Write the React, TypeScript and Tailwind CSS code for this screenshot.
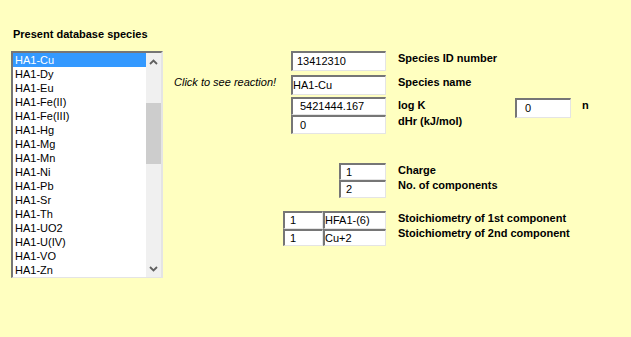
const species = [
  'HA1-Cu',
  'HA1-Dy',
  'HA1-Eu',
  'HA1-Fe(II)',
  'HA1-Fe(III)',
  'HA1-Hg',
  'HA1-Mg',
  'HA1-Mn',
  'HA1-Ni',
  'HA1-Pb',
  'HA1-Sr',
  'HA1-Th',
  'HA1-UO2',
  'HA1-U(IV)',
  'HA1-VO',
  'HA1-Zn',
];

const boxBorder =
  'border-t-2 border-l-2 border-t-[#767676] border-l-[#767676] border-b border-r border-b-[#e4e4e4] border-r-[#e4e4e4] bg-white';

function Box({ value, className }: { value: string; className: string }) {
  return (
    <div className={`flex items-center ${boxBorder} ${className}`}>
      <span className="leading-none">{value}</span>
    </div>
  );
}

function Chevron({ up }: { up?: boolean }) {
  return (
    <svg width="9" height="6" viewBox="0 0 9 6" className={up ? '' : 'rotate-180'}>
      <path d="M1 5 L4.5 1.5 L8 5" fill="none" stroke="#606060" strokeWidth="1.8" />
    </svg>
  );
}

export default function App() {
  return (
    <div className="flex h-[337px] w-[631px] overflow-hidden bg-[#ffffc0] font-['Liberation_Sans',Arial,sans-serif] text-[11px] text-black">
      {/* Species list */}
      <div className="flex flex-col pl-[11px] pt-[27px]">
        <div className="pl-[2px] text-[11px] font-bold leading-[14px]">Present database species</div>
        <div className="mt-[10px] flex h-[227px] w-[152px] border-t-2 border-l-2 border-t-[#767676] border-l-[#767676] border-b border-r-2 border-b-[#e4e4e4] border-r-[#e4e4e4] bg-white">
          <div className="flex-1 overflow-hidden">
            {species.map((s, i) => (
              <div
                key={s}
                className={`h-[14px] pl-[2px] leading-[14px] ${
                  i === 0 ? 'bg-[#3399ff] text-white' : ''
                }`}
              >
                {s}
              </div>
            ))}
          </div>
          <div className="flex w-[15px] flex-col bg-[#f0f0f0]">
            <div className="flex h-[17px] items-center justify-center">
              <Chevron up />
            </div>
            <div className="mt-[33px] h-[61px] bg-[#cdcdcd]" />
            <div className="flex-1" />
            <div className="flex h-[17px] items-center justify-center">
              <Chevron />
            </div>
          </div>
        </div>
      </div>

      {/* Species details */}
      <div className="ml-[11px] flex flex-col pt-[51px]">
        <div className="flex">
          <div className="flex w-[212px] justify-end">
            <Box value="13412310" className="h-[20px] w-[95px] pl-[4px]" />
          </div>
          <div className="ml-[12px] pt-[1px] font-bold leading-[13px]">Species ID number</div>
        </div>

        <div className="mt-[4px] flex">
          <div className="flex w-[212px] items-start justify-between">
            <span className="pt-[1px] italic leading-[13px]">Click to see reaction!</span>
            <Box value="HA1-Cu" className="h-[20px] w-[95px] pl-0" />
          </div>
          <div className="ml-[12px] pt-[1px] font-bold leading-[13px]">Species name</div>
        </div>

        <div className="mt-[2px] flex">
          <div className="flex w-[212px] justify-end">
            <div className="flex flex-col">
              <Box value="5421444.167" className="h-[18px] w-[95px] pl-[7px]" />
              <Box value="0" className="h-[19px] w-[95px] pl-[7px]" />
            </div>
          </div>
          <div className="ml-[12px] flex w-[117px] flex-col font-bold leading-[16px]">
            <span>log K</span>
            <span>dHr (kJ/mol)</span>
          </div>
          <Box value="0" className="mt-[1px] h-[20px] w-[56px] pl-[8px]" />
          <div className="ml-[11px] pt-[2px] font-bold leading-[13px]">n</div>
        </div>

        <div className="mt-[29px] flex">
          <div className="flex w-[212px] justify-end">
            <div className="flex flex-col">
              <Box value="1" className="h-[17px] w-[47px] pl-[5px]" />
              <Box value="2" className="h-[18px] w-[47px] pl-[5px]" />
            </div>
          </div>
          <div className="ml-[12px] flex flex-col font-bold leading-[15px]">
            <span>Charge</span>
            <span>No. of components</span>
          </div>
        </div>

        <div className="mt-[13px] flex">
          <div className="flex w-[212px] justify-end">
            <div className="grid grid-cols-[40px_63px]">
              <Box value="1" className="h-[18px] pl-[5px]" />
              <Box value="HFA1-(6)" className="h-[18px] pl-0" />
              <Box value="1" className="h-[17px] pl-[5px]" />
              <Box value="Cu+2" className="h-[17px] pl-0" />
            </div>
          </div>
          <div className="ml-[12px] flex flex-col font-bold leading-[15px]">
            <span>Stoichiometry of 1st component</span>
            <span>Stoichiometry of 2nd component</span>
          </div>
        </div>
      </div>
    </div>
  );
}
